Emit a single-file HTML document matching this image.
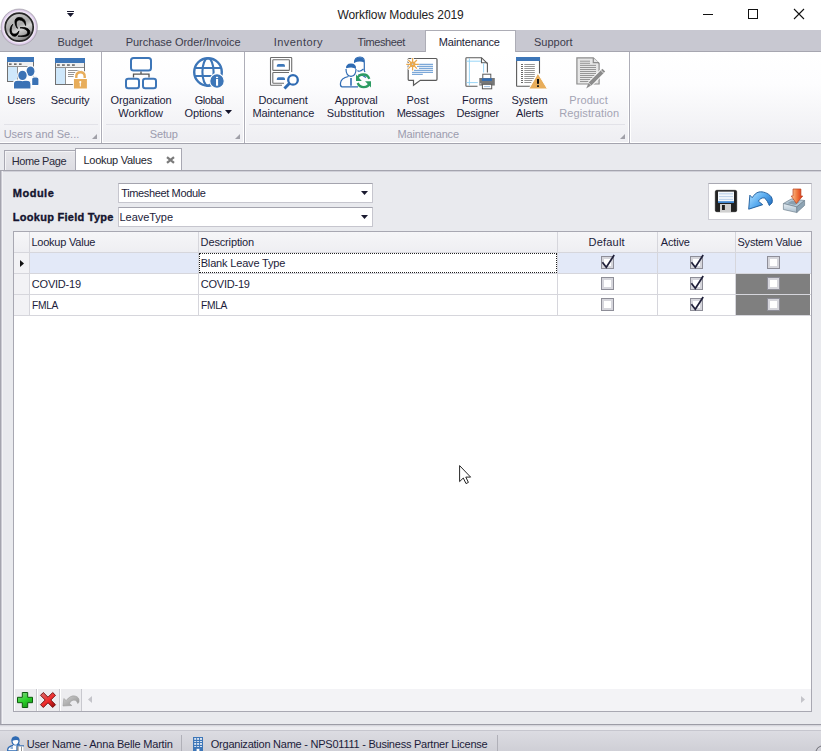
<!DOCTYPE html>
<html><head><meta charset="utf-8">
<style>
*{box-sizing:border-box}
html,body{margin:0;padding:0}
body{width:821px;height:751px;position:relative;overflow:hidden;background:#e9eaee;font-family:"Liberation Sans",sans-serif;font-size:11px;color:#1c1c3a}
.a{position:absolute}
.t{position:absolute;white-space:nowrap;line-height:13px}
svg{position:absolute;overflow:visible}
</style></head><body>

<!-- title bar -->
<div class="a" style="left:0;top:0;width:821px;height:30px;background:#fff"></div>
<div class="t" style="left:337.5px;top:8px;font-size:12px;line-height:14px;color:#222;letter-spacing:-0.08px">Workflow Modules 2019</div>
<!-- quick access -->
<div class="a" style="left:67px;top:11px;width:7px;height:1px;background:#1a1a30"></div>
<svg style="left:67px;top:13px" width="7" height="4"><path d="M0 0H7L3.5 4Z" fill="#1a1a30"/></svg>
<!-- window controls -->
<div class="a" style="left:703px;top:14px;width:10px;height:1px;background:#111"></div>
<div class="a" style="left:748px;top:9px;width:10px;height:10px;border:1px solid #111"></div>
<svg style="left:794px;top:9px" width="10" height="10"><path d="M0 0L10 10M10 0L0 10" stroke="#111" stroke-width="1.1"/></svg>

<!-- tab strip -->
<div class="a" style="left:0;top:30px;width:821px;height:22px;background:#c8c8d1;border-bottom:1px solid #a6a6b0"></div>
<div class="a" style="left:425px;top:30px;width:91px;height:23px;background:#fff;border:1px solid #adadb6;border-bottom:none"></div>
<div class="t" style="left:57.5px;top:36px;color:#3c3c4c;letter-spacing:0.02px">Budget</div>
<div class="t" style="left:125.7px;top:36px;color:#3c3c4c;letter-spacing:-0.03px">Purchase Order/Invoice</div>
<div class="t" style="left:273.8px;top:36px;color:#3c3c4c;letter-spacing:0.44px">Inventory</div>
<div class="t" style="left:357.5px;top:36px;color:#3c3c4c;letter-spacing:-0.39px">Timesheet</div>
<div class="t" style="left:438.7px;top:36px;color:#1e1e38;letter-spacing:-0.17px">Maintenance</div>
<div class="t" style="left:533.9px;top:36px;color:#3c3c4c;letter-spacing:0.02px">Support</div>

<!-- ribbon body -->
<div class="a" style="left:0;top:52px;width:821px;height:92px;background:linear-gradient(#fff,#fdfdfe 35%,#eeeef2);border-bottom:1px solid #a4a4ae"></div>
<div class="a" style="left:0;top:142px;width:821px;height:1px;background:#fff"></div>
<!-- group separators -->
<div class="a" style="left:100px;top:52px;width:3px;height:90px;background:#fff"></div><div class="a" style="left:101px;top:52px;width:1px;height:91px;background:#aeaeb8"></div>
<div class="a" style="left:243px;top:52px;width:3px;height:90px;background:#fff"></div><div class="a" style="left:244px;top:52px;width:1px;height:91px;background:#aeaeb8"></div>
<div class="a" style="left:628px;top:52px;width:3px;height:90px;background:#fff"></div><div class="a" style="left:629px;top:52px;width:1px;height:91px;background:#aeaeb8"></div>
<!-- group caption lines -->
<div class="a" style="left:4px;top:124px;width:94px;height:1px;background:#e2e2e8"></div>
<div class="a" style="left:106px;top:124px;width:134px;height:1px;background:#e2e2e8"></div>
<div class="a" style="left:249px;top:124px;width:376px;height:1px;background:#e2e2e8"></div>
<!-- group captions -->
<div class="t" style="left:3.7px;top:128px;color:#9c9cae;letter-spacing:-0.02px">Users and Se...</div>
<div class="t" style="left:149.8px;top:128px;color:#9c9cae;letter-spacing:-0.15px">Setup</div>
<div class="t" style="left:397.6px;top:128px;color:#9c9cae;letter-spacing:-0.15px">Maintenance</div>
<svg style="left:92px;top:134px" width="5" height="5"><path d="M5 0V5H0Z" fill="#a0a0a8"/></svg>
<svg style="left:235px;top:134px" width="5" height="5"><path d="M5 0V5H0Z" fill="#a0a0a8"/></svg>
<svg style="left:620px;top:134px" width="5" height="5"><path d="M5 0V5H0Z" fill="#a0a0a8"/></svg>

<!-- ribbon button labels -->
<div class="t" style="left:7.3px;top:94px;letter-spacing:-0.2px">Users</div>
<div class="t" style="left:50.8px;top:94px;letter-spacing:-0.14px">Security</div>
<div class="t" style="left:110.6px;top:94px;letter-spacing:-0.12px">Organization</div>
<div class="t" style="left:118.3px;top:107px;letter-spacing:-0.04px">Workflow</div>
<div class="t" style="left:194.7px;top:94px;letter-spacing:-0.46px">Global</div>
<div class="t" style="left:184.5px;top:107px;letter-spacing:-0.08px">Options</div>
<svg style="left:225px;top:110px" width="7" height="4"><path d="M0 0H7L3.5 4Z" fill="#14142a"/></svg>
<div class="t" style="left:258.5px;top:94px;letter-spacing:-0.13px">Document</div>
<div class="t" style="left:252.5px;top:107px;letter-spacing:-0.12px">Maintenance</div>
<div class="t" style="left:334.8px;top:94px;letter-spacing:-0.06px">Approval</div>
<div class="t" style="left:326.7px;top:107px;letter-spacing:0.05px">Substitution</div>
<div class="t" style="left:406.4px;top:94px;letter-spacing:0.1px">Post</div>
<div class="t" style="left:396.7px;top:107px;letter-spacing:-0.31px">Messages</div>
<div class="t" style="left:462.1px;top:94px;letter-spacing:-0.1px">Forms</div>
<div class="t" style="left:456.6px;top:107px;letter-spacing:-0.21px">Designer</div>
<div class="t" style="left:511.4px;top:94px;letter-spacing:-0.06px">System</div>
<div class="t" style="left:516px;top:107px;letter-spacing:-0.1px">Alerts</div>
<div class="t" style="left:569.3px;top:94px;color:#a4a4b4;letter-spacing:0.08px">Product</div>
<div class="t" style="left:559.3px;top:107px;color:#a4a4b4;letter-spacing:0.1px">Registration</div>

<!-- ribbon icons -->
<!-- Users -->
<svg style="left:7px;top:57px" width="32" height="32" viewBox="0 0 32 32">
<rect x="0.5" y="0.5" width="26" height="24" fill="#fff" stroke="#707070"/>
<rect x="0" y="0" width="27" height="5" fill="#3d76b8"/>
<rect x="1" y="5" width="25" height="4" fill="#f0f0f0"/>
<rect x="2" y="6.4" width="2.6" height="1.5" fill="#606060"/><rect x="7" y="6.4" width="2.6" height="1.5" fill="#606060"/><rect x="12" y="6.4" width="2.6" height="1.5" fill="#606060"/>
<rect x="1" y="9" width="25" height="1" fill="#909090"/>
<rect x="1" y="10" width="9" height="14" fill="#cfe8fb"/>
<rect x="10" y="10" width="1" height="14" fill="#909090"/>
<path d="M24.6 31.5 V22 Q24.6 19.8 27 19.8 H29.5 Q32 19.8 32 22 V27.5 Q32 28.5 31 28.5 H24.6Z" fill="#3a72b5" stroke="#fff" stroke-width="1.2"/>
<ellipse cx="23.5" cy="14.3" rx="4.6" ry="5.4" fill="#3a72b5" stroke="#fff" stroke-width="1.2"/>
<path d="M6.4 32 V27 Q6.4 23.2 10.5 23.2 H19.5 Q24 23.2 24 27 V32Z" fill="#3a72b5" stroke="#fff" stroke-width="1.2"/>
<ellipse cx="15.5" cy="18.4" rx="4.8" ry="5.3" fill="#3a72b5" stroke="#fff" stroke-width="1.2"/>
</svg>
<!-- Security -->
<svg style="left:55px;top:57px" width="32" height="32" viewBox="0 0 32 32">
<rect x="0.5" y="1.5" width="29" height="26" fill="#fff" stroke="#707070"/>
<rect x="0" y="1" width="30" height="5" fill="#3d76b8"/>
<rect x="1" y="6" width="28" height="4" fill="#f0f0f0"/>
<rect x="2" y="7.3" width="2.8" height="1.5" fill="#606060"/><rect x="7" y="7.3" width="2.8" height="1.5" fill="#606060"/><rect x="12" y="7.3" width="2.8" height="1.5" fill="#606060"/><rect x="17" y="7.3" width="2.8" height="1.5" fill="#606060"/>
<rect x="1" y="10" width="28" height="1" fill="#909090"/>
<rect x="1" y="11" width="9" height="16" fill="#cfe8fb"/>
<rect x="10" y="11" width="1" height="16" fill="#909090"/>
<rect x="13" y="13" width="14" height="0.9" fill="#8a8a8a"/><rect x="13" y="15" width="8" height="0.9" fill="#8a8a8a"/><rect x="13" y="17" width="6" height="0.9" fill="#8a8a8a"/><rect x="13" y="19" width="5.5" height="0.9" fill="#8a8a8a"/>
<path d="M21.3 22 V19.5 Q21.3 15.2 25.5 15.2 Q29.7 15.2 29.7 19.5 V22" fill="none" stroke="#fff" stroke-width="4.4"/>
<path d="M21.3 22 V19.5 Q21.3 15.2 25.5 15.2 Q29.7 15.2 29.7 19.5 V22" fill="none" stroke="#e8ad5a" stroke-width="2.4"/>
<rect x="18.4" y="21.5" width="14" height="10.5" fill="#e8ad5a" stroke="#fff" stroke-width="1"/>
<circle cx="25.3" cy="25" r="1.1" fill="#fff"/><rect x="24.8" y="25" width="1" height="4.5" fill="#fff"/>
</svg>
<!-- Org Workflow -->
<svg style="left:125px;top:57px" width="32" height="32" viewBox="0 0 32 32">
<rect x="6" y="1" width="20" height="12.6" rx="2.5" fill="#fff" stroke="#3d76b8" stroke-width="2"/>
<path d="M16 14.5V17.2M8.5 20.5V17.2H24V20.5" fill="none" stroke="#555" stroke-width="1.3"/>
<rect x="1" y="21.8" width="13" height="9.4" rx="2.3" fill="#fff" stroke="#3d76b8" stroke-width="2"/>
<rect x="18" y="21.8" width="13" height="9.4" rx="2.3" fill="#fff" stroke="#3d76b8" stroke-width="2"/>
</svg>
<!-- Global Options -->
<svg style="left:193px;top:57px" width="32" height="32" viewBox="0 0 32 32">
<circle cx="15" cy="15" r="13.8" fill="#fff" stroke="#3d76b8" stroke-width="2.4"/>
<ellipse cx="15" cy="15" rx="5.6" ry="13.8" fill="none" stroke="#3d76b8" stroke-width="2.1"/>
<path d="M1.5 11H28.5M1.5 19H28.5" stroke="#3d76b8" stroke-width="2.1"/>
<circle cx="24" cy="24" r="7.3" fill="#3d76b8" stroke="#fff" stroke-width="1.2"/>
<rect x="23" y="19.8" width="2.1" height="1.3" fill="#fff"/><rect x="23" y="22" width="2.1" height="6.7" fill="#fff"/>
</svg>
<!-- Document Maintenance -->
<svg style="left:269px;top:57px" width="32" height="32" viewBox="0 0 32 32">
<path d="M13 28.2H2.2Q1.5 28.2 1.5 27.5V1.2Q1.5 0.5 2.2 0.5H22Q22.7 0.5 22.7 1.2V15" fill="none" stroke="#6e6e6e" stroke-width="1.1"/>
<rect x="3.8" y="2.8" width="16.6" height="10.6" rx="0.7" fill="none" stroke="#6e6e6e" stroke-width="1.1"/>
<path d="M15 26.3H4.5Q3.8 26.3 3.8 25.6V16.2Q3.8 15.5 4.5 15.5H20" fill="none" stroke="#6e6e6e" stroke-width="1.1"/>
<path d="M7.8 9.7V8.7Q7.8 7.1 9.5 7.1H14.3Q16 7.1 16 8.7V9.7Z" fill="#3d76b8"/>
<path d="M7.8 22.9V21.9Q7.8 20.3 9.5 20.3H14.3Q16 20.3 16 21.9V22.9Z" fill="#3d76b8"/>
<path d="M19.8 27L16.5 30.4" stroke="#2f6bb3" stroke-width="3" stroke-linecap="square"/>
<circle cx="24" cy="22.9" r="4.8" fill="#fff" stroke="#2f6bb3" stroke-width="2.3"/>
</svg>
<!-- Approval Substitution -->
<svg style="left:339px;top:57px" width="32" height="32" viewBox="0 0 32 32">
<path d="M19.5 17.5Q24 18 27 20.5" fill="none" stroke="#2f6bb3" stroke-width="1.2"/>
<path d="M15.5 5.8Q15.5 0 21 0Q26 0 25.3 6V13.5L26 15" fill="none" stroke="#2f6bb3" stroke-width="1.2"/>
<path d="M15 5.8Q15.5 0.2 20.5 0.2Q25.5 0.3 25.2 5.5Q21 3.5 15 5.8Z" fill="#2f6bb3"/>
<path d="M18.5 13.5Q20.5 15.5 24.5 12" fill="none" stroke="#2f6bb3" stroke-width="1.1"/>
<path d="M7 12Q7 19 12 19.3Q17 19 17 12" fill="#fff" stroke="#2f6bb3" stroke-width="1.2"/>
<path d="M7 12Q6.5 6.5 12 6.5Q17.5 6.5 17 12Q14 9.3 7 11.2Z" fill="#2f6bb3"/>
<path d="M9.5 19.5Q2 21 1.5 26Q1 29.5 3 29.8H19" fill="none" stroke="#2f6bb3" stroke-width="1.2"/>
<path d="M12 21V28.7" stroke="#2f6bb3" stroke-width="1.6"/>
<path d="M18.2 21.5A6.5 6.5 0 0 1 30.3 21.8" fill="none" stroke="#2c9b62" stroke-width="2.3"/>
<path d="M30.8 26A6.5 6.5 0 0 1 18.7 26" fill="none" stroke="#2c9b62" stroke-width="2.3"/>
<path d="M17 17.5V24H22.8Z" fill="#2c9b62"/>
<path d="M32 30.5V24.2H26Z" fill="#2c9b62"/>
</svg>
<!-- Post Messages -->
<svg style="left:405px;top:57px" width="32" height="32" viewBox="0 0 32 32">
<path d="M4 1.5H31Q32 1.5 32 2.5V22.3Q32 23.3 31 23.3H15.3L8.5 28.3V23.3H4Q3.2 23.3 3.2 22.5V2.5Q3.2 1.5 4 1.5Z" fill="#fff" stroke="#5a5a5a" stroke-width="1.2"/>
<path d="M14 7.3H28M12 9.3H28M14 11.3H28M9 13.3H28M7 15.3H28M7 17.3H17.8" stroke="#4a86c8" stroke-width="0.9"/>
<path d="M7.6 0.5V14.2M1 7.3H14.2M2.9 2.6L12.3 12M12.3 2.6L2.9 12" stroke="#fff" stroke-width="2.6"/>
<path d="M7.6 1.1V13.6M1.3 7.3H13.9M3.3 3L11.9 11.6M11.9 3L3.3 11.6" stroke="#eaa84a" stroke-width="1.3"/>
<circle cx="7.6" cy="7.3" r="2.8" fill="#eaa84a"/>
<circle cx="7.6" cy="7.3" r="0.8" fill="#b8d0e8"/>
</svg>
<!-- Forms Designer -->
<svg style="left:465px;top:57px" width="32" height="32" viewBox="0 0 32 32">
<path d="M12.5 29.2H1.5Q0.9 29.2 0.9 28.5V1.5Q0.9 0.7 1.5 0.7H16.5L22.4 6.5V15.5" fill="#fff" stroke="#5a5a5a" stroke-width="1.1"/>
<path d="M16.5 0.7V5.7H22.4" fill="none" stroke="#5a5a5a" stroke-width="1.1"/>
<path d="M4.4 1.2V28.7M1.4 4.2H16M1.4 25.6H12.8M18.6 6.2V15.5" stroke="#8dd0f5" stroke-width="0.9"/>
<rect x="17.8" y="17.2" width="8" height="4.5" fill="#fff" stroke="#5a5a5a" stroke-width="1"/>
<rect x="14.3" y="21" width="15.5" height="7.5" fill="#777"/>
<rect x="16.9" y="21.3" width="10" height="2.6" fill="#2f6bb3"/>
<rect x="14.8" y="26.5" width="1.5" height="0.8" fill="#fff"/>
<rect x="17.4" y="27.3" width="9.3" height="4.5" fill="#fff" stroke="#5a5a5a" stroke-width="1"/>
<path d="M19 29.6H25" stroke="#8ab2dc" stroke-width="0.8"/>
</svg>
<!-- System Alerts -->
<svg style="left:516px;top:57px" width="32" height="32" viewBox="0 0 32 32">
<path d="M14.5 29.2H1Q0.6 29.2 0.6 28.7V0.6H23.5V16.5" fill="#fff" stroke="#5a5a5a" stroke-width="1.1"/>
<rect x="0" y="0" width="24" height="4" fill="#3d76b8"/>
<g fill="#5a5a5a">
<rect x="5" y="7" width="2" height="0.9"/><rect x="5" y="9" width="2" height="0.9"/><rect x="5" y="11" width="2" height="0.9"/><rect x="5" y="13" width="2" height="0.9"/><rect x="5" y="15" width="2" height="0.9"/><rect x="5" y="17" width="2" height="0.9"/><rect x="5" y="19" width="2" height="0.9"/><rect x="5" y="21" width="2" height="0.9"/><rect x="5" y="23" width="2" height="0.9"/><rect x="5" y="25" width="2" height="0.9"/>
</g>
<g fill="#8a8a8a">
<rect x="8.3" y="7" width="10.5" height="0.9"/><rect x="8.3" y="9" width="10.5" height="0.9"/><rect x="8.3" y="11" width="10.5" height="0.9"/><rect x="8.3" y="13" width="10.5" height="0.9"/><rect x="8.3" y="15" width="10.5" height="0.9"/><rect x="8.3" y="17" width="10.5" height="0.9"/><rect x="8.3" y="19" width="10.5" height="0.9"/><rect x="8.3" y="21" width="9.5" height="0.9"/><rect x="8.3" y="23" width="8" height="0.9"/><rect x="8.3" y="25" width="7" height="0.9"/>
</g>
<path d="M21.9 16.2L31.5 32H12.8Z" fill="#e8ad5a" stroke="#fff" stroke-width="1"/>
<rect x="21" y="22" width="2" height="4.8" fill="#111"/><rect x="21" y="28.3" width="2" height="1.6" fill="#111"/>
</svg>
<!-- Product Registration -->
<svg style="left:576px;top:57px" width="32" height="32" viewBox="0 0 32 32">
<path d="M0.9 0.9H17.3L23.1 6.5V27H0.9Z" fill="#e6e6e6" stroke="#8c8c8c" stroke-width="1.2"/>
<path d="M17.3 0.9V5.7H23.1" fill="#e6e6e6" stroke="#8c8c8c" stroke-width="1.2"/>
<g stroke="#8c8c8c" stroke-width="0.9">
<path d="M4 4.2H14M4 6.3H14M4 8.4H20M4 10.5H20M4 12.5H20M4 14.5H20M4 16.5H20M4 18.5H19M4 20.5H17M4 22.5H14.5M4 24.5H13"/>
</g>
<path d="M13.5 27.5L28.5 12.5" stroke="#fff" stroke-width="6"/>
<path d="M14 27L27.8 13.2" stroke="#8c8c8c" stroke-width="4"/>
<path d="M26 15L28 13" stroke="#e6e6e6" stroke-width="4.2" stroke-dasharray="0.8 30"/>
<path d="M12.5 26L15 28.5L10.2 31.6Z" fill="#8c8c8c"/>
</svg>

<!-- logo -->
<svg style="left:0;top:8px" width="40" height="40" viewBox="0 0 40 40">
<defs>
<radialGradient id="rim" cx="0.5" cy="0.5" r="0.5"><stop offset="0.77" stop-color="#fbfafc"/><stop offset="0.86" stop-color="#efe6f5"/><stop offset="0.94" stop-color="#dcc8ea"/><stop offset="1" stop-color="#bcb4c4"/></radialGradient>
<linearGradient id="disk" x1="0.2" y1="0" x2="0.7" y2="1"><stop offset="0" stop-color="#cfcfcf"/><stop offset="0.45" stop-color="#a8a8a8"/><stop offset="0.6" stop-color="#d4d4d4"/><stop offset="1" stop-color="#747474"/></linearGradient>
</defs>
<circle cx="19.2" cy="19.2" r="18.2" fill="url(#rim)" stroke="#a8a4ae" stroke-width="0.7"/>
<circle cx="19.2" cy="19.2" r="14" fill="url(#disk)" stroke="#262626" stroke-width="1.7"/>
<g fill="#000" stroke="#000" stroke-width="0.8" stroke-linejoin="round">
<path d="M17.5 20.4C14.5 17 13.2 9.6 19 9.4C23.8 9.3 26 13 25.6 17.5C24.5 14 22.5 11.9 19.5 11.9C15.8 12 15.5 16.5 17.5 20.4Z"/>
<path d="M12.7 16.3C9 19.5 8.8 27.5 14.3 28.3C17 28.5 18.5 25.5 19 22.9C17.5 25 16 26.1 14 26.1C10.8 26 10.5 20.5 12.7 16.3Z"/>
<path d="M20 19.8C25 18.8 30 20.5 29.9 24.5C29.8 28 25 29.2 17.9 28.1C24 28 27.8 27 27.6 24.2C27.4 21.5 23.5 20.2 20 19.8Z"/>
</g>
</svg>

<!-- doc tabs -->
<div class="a" style="left:4px;top:150px;width:72px;height:21px;background:linear-gradient(#e6e6ea,#dcdce2);border:1px solid #a8a8b2;border-bottom:none;box-shadow:inset 1px 1px 0 #f4f4f6"></div>
<div class="t" style="left:11.7px;top:155px;color:#2a2a3a;letter-spacing:-0.41px">Home Page</div>
<div class="a" style="left:75px;top:148px;width:107px;height:23px;background:#fff;border:1px solid #a8a8b2;border-bottom:none"></div>
<div class="t" style="left:83.5px;top:154px;color:#1e1e2e;letter-spacing:-0.27px">Lookup Values</div>
<svg style="left:166px;top:156px" width="9" height="8"><path d="M1 1.2L8 6.8M8 1.2L1 6.8" stroke="#7c7c7c" stroke-width="2.3"/></svg>

<!-- content panel -->
<div class="a" style="left:0;top:170px;width:821px;height:555px;border-top:1px solid #a4a4ae;border-left:1px solid #a4a4ae;border-bottom:1px solid #9c9ca6;background:#e9eaee"></div>
<div class="a" style="left:1px;top:171px;width:820px;height:1px;background:#d0d0d8"></div><div class="a" style="left:1px;top:171px;width:1px;height:553px;background:#cbcbd3"></div><div class="a" style="left:2px;top:171px;width:1px;height:553px;background:#f2f2f5"></div>

<div class="t" style="left:12.8px;top:187px;font-weight:bold;color:#14142e;letter-spacing:0.5px;-webkit-text-stroke:0.35px #14142e">Module</div>
<div class="t" style="left:12.8px;top:211px;font-weight:bold;color:#14142e;letter-spacing:0.27px;-webkit-text-stroke:0.35px #14142e">Lookup Field Type</div>

<div class="a" style="left:118px;top:183px;width:255px;height:20px;background:#fff;border:1px solid #c6c6ce;border-top-color:#a4a4ae"></div>
<div class="t" style="left:121.3px;top:187px;letter-spacing:-0.37px">Timesheet Module</div>
<svg style="left:361px;top:191px" width="7" height="4"><path d="M0 0H7L3.5 4Z" fill="#1a1a30"/></svg>
<div class="a" style="left:118px;top:207px;width:255px;height:20px;background:#fff;border:1px solid #c6c6ce;border-top-color:#a4a4ae"></div>
<div class="t" style="left:119.5px;top:211px;letter-spacing:-0.04px">LeaveType</div>
<svg style="left:361px;top:215px" width="7" height="4"><path d="M0 0H7L3.5 4Z" fill="#1a1a30"/></svg>

<!-- toolbar box -->
<div class="a" style="left:708px;top:183px;width:104px;height:37px;background:#fff;border:1px solid #cdcdd4;border-top-color:#a8a8b2"></div>
<!-- toolbar icons -->
<svg style="left:715px;top:190px" width="22" height="22" viewBox="0 0 22 22">
<rect x="0.3" y="0.3" width="21.4" height="21.4" rx="1.5" fill="#222" stroke="#111" stroke-width="0.6"/>
<rect x="3" y="1.6" width="16" height="11.4" fill="#f4f8fc"/>
<path d="M4 3.8H18M4 6.6H18M4 9.4H18" stroke="#a9c5e6" stroke-width="0.8"/>
<rect x="3" y="11.2" width="16" height="1.8" fill="#3f86d0"/>
<rect x="5" y="14" width="11" height="8" fill="#d0d0d0"/>
<rect x="7" y="15" width="2.9" height="5" fill="#1e1e1e"/>
</svg>
<svg style="left:744px;top:186px" width="32" height="28" viewBox="0 0 32 28">
<defs><linearGradient id="ug" x1="0" y1="0.2" x2="1" y2="0.9"><stop offset="0" stop-color="#a8dcff"/><stop offset="0.45" stop-color="#5aacf0"/><stop offset="1" stop-color="#1a64b8"/></linearGradient></defs>
<path d="M5.85 9.16L8.2 11.7C10 9 12 6.6 15 6C19 5.3 24 7 27 10.5C28.5 12.5 28.5 15 28.1 16.8L25.3 19.5C24 17 23 13.5 20.3 11.9C18 11.5 15.5 13 14.4 15.2L18.7 18.7L4.68 23.2Z" fill="url(#ug)" stroke="#1a5898" stroke-width="0.9" stroke-linejoin="round"/>
</svg>
<svg style="left:780px;top:186px" width="28" height="28" viewBox="0 0 28 28">
<defs><linearGradient id="tg" x1="0" y1="0" x2="0" y2="1"><stop offset="0" stop-color="#e8f0f6"/><stop offset="1" stop-color="#a8bccb"/></linearGradient>
<linearGradient id="ag" x1="0" y1="0" x2="1" y2="0"><stop offset="0" stop-color="#fbc89a"/><stop offset="0.5" stop-color="#f07a40"/><stop offset="1" stop-color="#d82a10"/></linearGradient></defs>
<path d="M3.4 17.5L11.2 13L24.6 14.5L16.8 20.9Z" fill="#b4c8d6" stroke="#71828f" stroke-width="0.7" stroke-linejoin="round"/>
<path d="M3.4 17.5L16.8 20.9V26.5L3.4 23.5Z" fill="url(#tg)" stroke="#71828f" stroke-width="0.7" stroke-linejoin="round"/>
<path d="M16.8 20.9L24.6 14.5V19.4L16.8 26.5Z" fill="#8ea4b4" stroke="#71828f" stroke-width="0.7" stroke-linejoin="round"/>
<path d="M7 17.2L12 14.8L20 15.8L15.5 19Z" fill="#8aa0b0"/>
<path d="M13 3H20.9V10H22.7L16.4 17.5L11.2 10H13Z" fill="url(#ag)" stroke="#b8401c" stroke-width="0.7" stroke-linejoin="round"/>
</svg>

<!-- grid -->
<div class="a" style="left:13px;top:231px;width:799px;height:481px;background:#fff;border:1px solid #a8a8b2"></div>
<div class="a" style="left:14px;top:232px;width:797px;height:20px;background:linear-gradient(#f6f6f8,#eeeef2)"></div>
<div class="a" style="left:14px;top:252px;width:15px;height:63px;background:#f2f2f5"></div>
<div class="a" style="left:30px;top:253px;width:781px;height:20px;background:#e3e9f8"></div>
<div class="a" style="left:199px;top:253px;width:358px;height:20px;background:#fff;border:1px dotted #222"></div>
<div class="a" style="left:736px;top:274px;width:74px;height:20px;background:#7f7f7f"></div>
<div class="a" style="left:736px;top:295px;width:74px;height:20px;background:#7f7f7f"></div>
<!-- grid lines -->
<div class="a" style="left:14px;top:252px;width:797px;height:1px;background:#d6d6dc"></div>
<div class="a" style="left:14px;top:273px;width:797px;height:1px;background:#d6d6dc"></div>
<div class="a" style="left:14px;top:294px;width:797px;height:1px;background:#d6d6dc"></div>
<div class="a" style="left:14px;top:315px;width:797px;height:1px;background:#d6d6dc"></div>
<div class="a" style="left:29px;top:232px;width:1px;height:83px;background:#d6d6dc"></div>
<div class="a" style="left:198px;top:232px;width:1px;height:83px;background:#d6d6dc"></div>
<div class="a" style="left:557px;top:232px;width:1px;height:83px;background:#d6d6dc"></div>
<div class="a" style="left:657px;top:232px;width:1px;height:83px;background:#d6d6dc"></div>
<div class="a" style="left:735px;top:232px;width:1px;height:83px;background:#d6d6dc"></div>
<!-- header text -->
<div class="t" style="left:31.4px;top:236px;letter-spacing:-0.22px">Lookup Value</div>
<div class="t" style="left:200.6px;top:236px;letter-spacing:-0.14px">Description</div>
<div class="t" style="left:588.5px;top:236px;letter-spacing:0.22px">Default</div>
<div class="t" style="left:660.8px;top:236px;letter-spacing:-0.16px">Active</div>
<div class="t" style="left:737.5px;top:236px;letter-spacing:-0.23px">System Value</div>
<svg style="left:20px;top:260px" width="4" height="7"><path d="M0 0L4 3.5L0 7Z" fill="#111"/></svg>
<div class="t" style="left:200.7px;top:257px;letter-spacing:-0.17px">Blank Leave Type</div>
<div class="t" style="left:31.8px;top:278px;letter-spacing:-0.21px">COVID-19</div>
<div class="t" style="left:200.7px;top:278px;letter-spacing:-0.21px">COVID-19</div>
<div class="t" style="left:32px;top:299px;letter-spacing:-0.3px;transform:scaleX(0.93);transform-origin:0 0">FMLA</div>
<div class="t" style="left:201px;top:299px;letter-spacing:-0.3px;transform:scaleX(0.93);transform-origin:0 0">FMLA</div>

<!-- checkboxes -->
<div class="a" style="left:601px;top:256px;width:13px;height:13px;border:1px solid #8e8e98;background:#fff"><div class="a" style="left:0;top:0;width:11px;height:11px;border:2px solid #d6d6dc"></div></div><svg style="left:601px;top:254px" width="15" height="15" viewBox="0 0 15 15"><path d="M1.4 8.2L5.3 13.2L13.2 1" fill="none" stroke="#20203a" stroke-width="1.7"/></svg>
<div class="a" style="left:690px;top:256px;width:13px;height:13px;border:1px solid #8e8e98;background:#fff"><div class="a" style="left:0;top:0;width:11px;height:11px;border:2px solid #d6d6dc"></div></div><svg style="left:690px;top:254px" width="15" height="15" viewBox="0 0 15 15"><path d="M1.4 8.2L5.3 13.2L13.2 1" fill="none" stroke="#20203a" stroke-width="1.7"/></svg>
<div class="a" style="left:767px;top:256px;width:13px;height:13px;border:1px solid #8e8e98;background:#fff"><div class="a" style="left:0;top:0;width:11px;height:11px;border:2px solid #d6d6dc"></div></div>
<div class="a" style="left:601px;top:277px;width:13px;height:13px;border:1px solid #8e8e98;background:#fff"><div class="a" style="left:0;top:0;width:11px;height:11px;border:2px solid #d6d6dc"></div></div>
<div class="a" style="left:690px;top:277px;width:13px;height:13px;border:1px solid #8e8e98;background:#fff"><div class="a" style="left:0;top:0;width:11px;height:11px;border:2px solid #d6d6dc"></div></div><svg style="left:690px;top:275px" width="15" height="15" viewBox="0 0 15 15"><path d="M1.4 8.2L5.3 13.2L13.2 1" fill="none" stroke="#20203a" stroke-width="1.7"/></svg>
<div class="a" style="left:767px;top:277px;width:13px;height:13px;border:1px solid #8e8e98;background:#fff"><div class="a" style="left:0;top:0;width:11px;height:11px;border:2px solid #d6d6dc"></div></div>
<div class="a" style="left:601px;top:298px;width:13px;height:13px;border:1px solid #8e8e98;background:#fff"><div class="a" style="left:0;top:0;width:11px;height:11px;border:2px solid #d6d6dc"></div></div>
<div class="a" style="left:690px;top:298px;width:13px;height:13px;border:1px solid #8e8e98;background:#fff"><div class="a" style="left:0;top:0;width:11px;height:11px;border:2px solid #d6d6dc"></div></div><svg style="left:690px;top:296px" width="15" height="15" viewBox="0 0 15 15"><path d="M1.4 8.2L5.3 13.2L13.2 1" fill="none" stroke="#20203a" stroke-width="1.7"/></svg>
<div class="a" style="left:767px;top:298px;width:13px;height:13px;border:1px solid #8e8e98;background:#fff"><div class="a" style="left:0;top:0;width:11px;height:11px;border:2px solid #d6d6dc"></div></div>
<!-- navigator -->
<div class="a" style="left:14px;top:689px;width:797px;height:22px;background:#f3f3f6"></div>
<div class="a" style="left:14px;top:689px;width:23px;height:22px;background:#ececef;border-right:1px solid #c8c8ce;border-left:1px solid #fff"></div>
<div class="a" style="left:37px;top:689px;width:23px;height:22px;background:#ececef;border-right:1px solid #c8c8ce;border-left:1px solid #fff"></div>
<div class="a" style="left:60px;top:689px;width:22px;height:22px;background:#ececef;border-right:1px solid #c8c8ce;border-left:1px solid #fff"></div>
<svg style="left:88px;top:696px" width="4" height="7"><path d="M4 0V7L0 3.5Z" fill="#c4c4ca"/></svg>
<svg style="left:801px;top:696px" width="4" height="7"><path d="M0 0V7L4 3.5Z" fill="#c4c4ca"/></svg>

<!-- status bar -->
<div class="a" style="left:0;top:725px;width:821px;height:5px;background:linear-gradient(#cfcfd6,#ececf0 40%,#ececf0)"></div>
<div class="a" style="left:0;top:730px;width:821px;height:21px;background:linear-gradient(#dcdce2,#cfcfd6);border-top:1px solid #c6c6ce"></div>
<svg style="left:815px;top:745px" width="6" height="6"><path d="M1 6Q2 2 6 1" fill="none" stroke="#707078" stroke-width="1"/></svg>
<div class="t" style="left:26.8px;top:737.6px;letter-spacing:-0.2px">User Name - Anna Belle Martin</div>
<div class="a" style="left:181px;top:735px;width:1px;height:16px;background:#b0b0b8"></div>
<div class="t" style="left:210.8px;top:737.6px;letter-spacing:-0.24px">Organization Name - NPS01111 - Business Partner License</div>
<div class="a" style="left:497px;top:735px;width:1px;height:16px;background:#b0b0b8"></div>

<!-- nav icons -->
<svg style="left:17px;top:692px" width="16" height="16" viewBox="0 0 16 16">
<defs><linearGradient id="gp" x1="0" y1="0" x2="0.6" y2="1"><stop offset="0" stop-color="#8fd08f"/><stop offset="0.6" stop-color="#2ad42a"/><stop offset="1" stop-color="#1a9a1a"/></linearGradient></defs>
<path d="M5.3 0.5H10.7V5.3H15.5V10.7H10.7V15.5H5.3V10.7H0.5V5.3H5.3Z" fill="url(#gp)" stroke="#0e5a0e" stroke-width="1" stroke-linejoin="round"/>
</svg>
<svg style="left:40px;top:692px" width="16" height="16" viewBox="0 0 16 16">
<defs><linearGradient id="rx" x1="0" y1="0" x2="0.8" y2="1"><stop offset="0" stop-color="#d87070"/><stop offset="0.6" stop-color="#f02a2a"/><stop offset="1" stop-color="#a01010"/></linearGradient></defs>
<path d="M0.5 3.3L3.3 0.5L8 5.2L12.7 0.5L15.5 3.3L10.8 8L15.5 12.7L12.7 15.5L8 10.8L3.3 15.5L0.5 12.7L5.2 8Z" fill="url(#rx)" stroke="#6a0a0a" stroke-width="0.9" stroke-linejoin="round"/>
</svg>
<svg style="left:62px;top:694px" width="18" height="13" viewBox="0 0 18 13">
<defs><linearGradient id="gu" x1="0" y1="0" x2="1" y2="1"><stop offset="0" stop-color="#d0d0d0"/><stop offset="1" stop-color="#909090"/></linearGradient></defs>
<path d="M1 12L1.8 4.5L4.2 6.5Q8.5 1 13 2Q17.5 3 17 7.5Q16.7 8.8 15.8 9.5L14.8 7.5Q13.5 5.8 11 6.2Q8.5 6.6 7.5 9.5L9.8 11.5Z" fill="url(#gu)" stroke="#9a9a9a" stroke-width="0.6"/>
</svg>

<!-- status icons -->
<svg style="left:7px;top:736px" width="17" height="15" viewBox="0 0 17 15">
<path d="M5 5.5Q4.5 1 8.5 0.8Q12.5 1 12 5.5Q11.5 9 8.5 9.3Q5.5 9 5 5.5Z" fill="#fff" stroke="#2f6bb3" stroke-width="1.3"/>
<path d="M4.8 5Q5 0.8 8.5 0.8Q12 0.8 12.2 5Q10 3 4.8 5Z" fill="#2f6bb3"/>
<path d="M11 7.5L12.5 9" stroke="#2f6bb3" stroke-width="1.5"/>
<path d="M6 9.5Q1 10.5 0.7 13.5V15H10V9.5" fill="#fff" stroke="#2f6bb3" stroke-width="1.3"/>
<path d="M3.5 12H6" stroke="#2f6bb3" stroke-width="1"/>
<rect x="10" y="9.3" width="7" height="1.2" fill="#2f6bb3"/>
<rect x="10.5" y="10.5" width="5.8" height="4.5" fill="#fff"/>
<rect x="14" y="10.5" width="0.9" height="4.5" fill="#888"/>
<rect x="10.5" y="10.5" width="0.9" height="4.5" fill="#555"/>
</svg>
<svg style="left:193px;top:737px" width="10" height="14" viewBox="0 0 10 14">
<rect x="0" y="0" width="10" height="14" fill="#3d76b8"/>
<g fill="#fff">
<rect x="1.2" y="1.2" width="2" height="1.5"/><rect x="4.1" y="1.2" width="2" height="1.5"/><rect x="7" y="1.2" width="2" height="1.5"/>
<rect x="1.2" y="4" width="2" height="0.8"/><rect x="4.1" y="4" width="2" height="0.8"/><rect x="7" y="4" width="2" height="0.8"/>
<rect x="1.2" y="6.2" width="2" height="1.5"/><rect x="4.1" y="6.2" width="2" height="1.5"/><rect x="7" y="6.2" width="2" height="1.5"/>
<rect x="1.2" y="9" width="2" height="0.8"/><rect x="4.1" y="9" width="2" height="0.8"/><rect x="7" y="9" width="2" height="0.8"/>
<rect x="3.6" y="11.8" width="2.8" height="2.2"/>
</g>
</svg>

<!-- cursor -->
<svg style="left:459px;top:465px" width="13" height="20" viewBox="0 0 13 20">
<path d="M0.6 0.6L0.6 16.6L4.3 13L7 18.6L9.4 17.4L6.8 12.1L11.6 12.1Z" fill="#fff" stroke="#1a1a1a" stroke-width="0.95" stroke-linejoin="round"/>
</svg>
</body></html>
